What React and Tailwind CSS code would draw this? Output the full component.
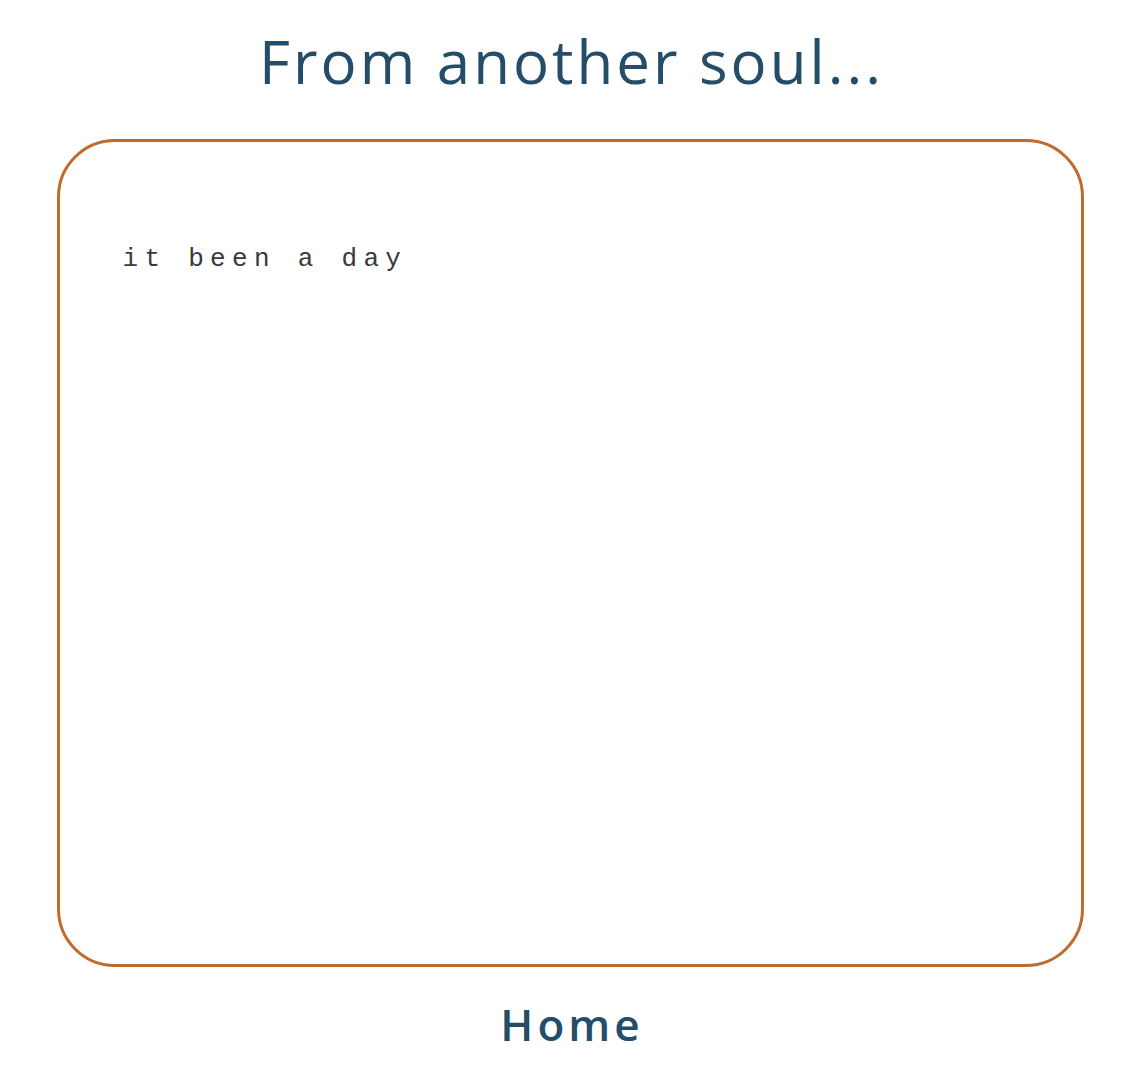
export default function App() {
  return (
    <div className="min-h-screen bg-white flex flex-col items-center">
      <h1 className="mt-[21px] ml-[14px] text-[60px] leading-[80px] text-[#234d68] tracking-[3px] font-['Open_Sans',sans-serif]">
        From another soul...
      </h1>
      <div className="mt-[38px] ml-[11px] w-[1027px] h-[828px] border-[3px] border-[#c06a2b] rounded-[58px] px-[63px] pt-[102px]">
        <p className="font-['Liberation_Mono',monospace] text-[26px] leading-[30px] tracking-[6.3px] text-[#3a3a3a]">
          it been a day
        </p>
      </div>
      <a className="mt-[29px] ml-[15px] text-[44px] leading-[56px] font-semibold tracking-[4px] text-[#234d68] font-['Open_Sans',sans-serif]">
        Home
      </a>
    </div>
  );
}
